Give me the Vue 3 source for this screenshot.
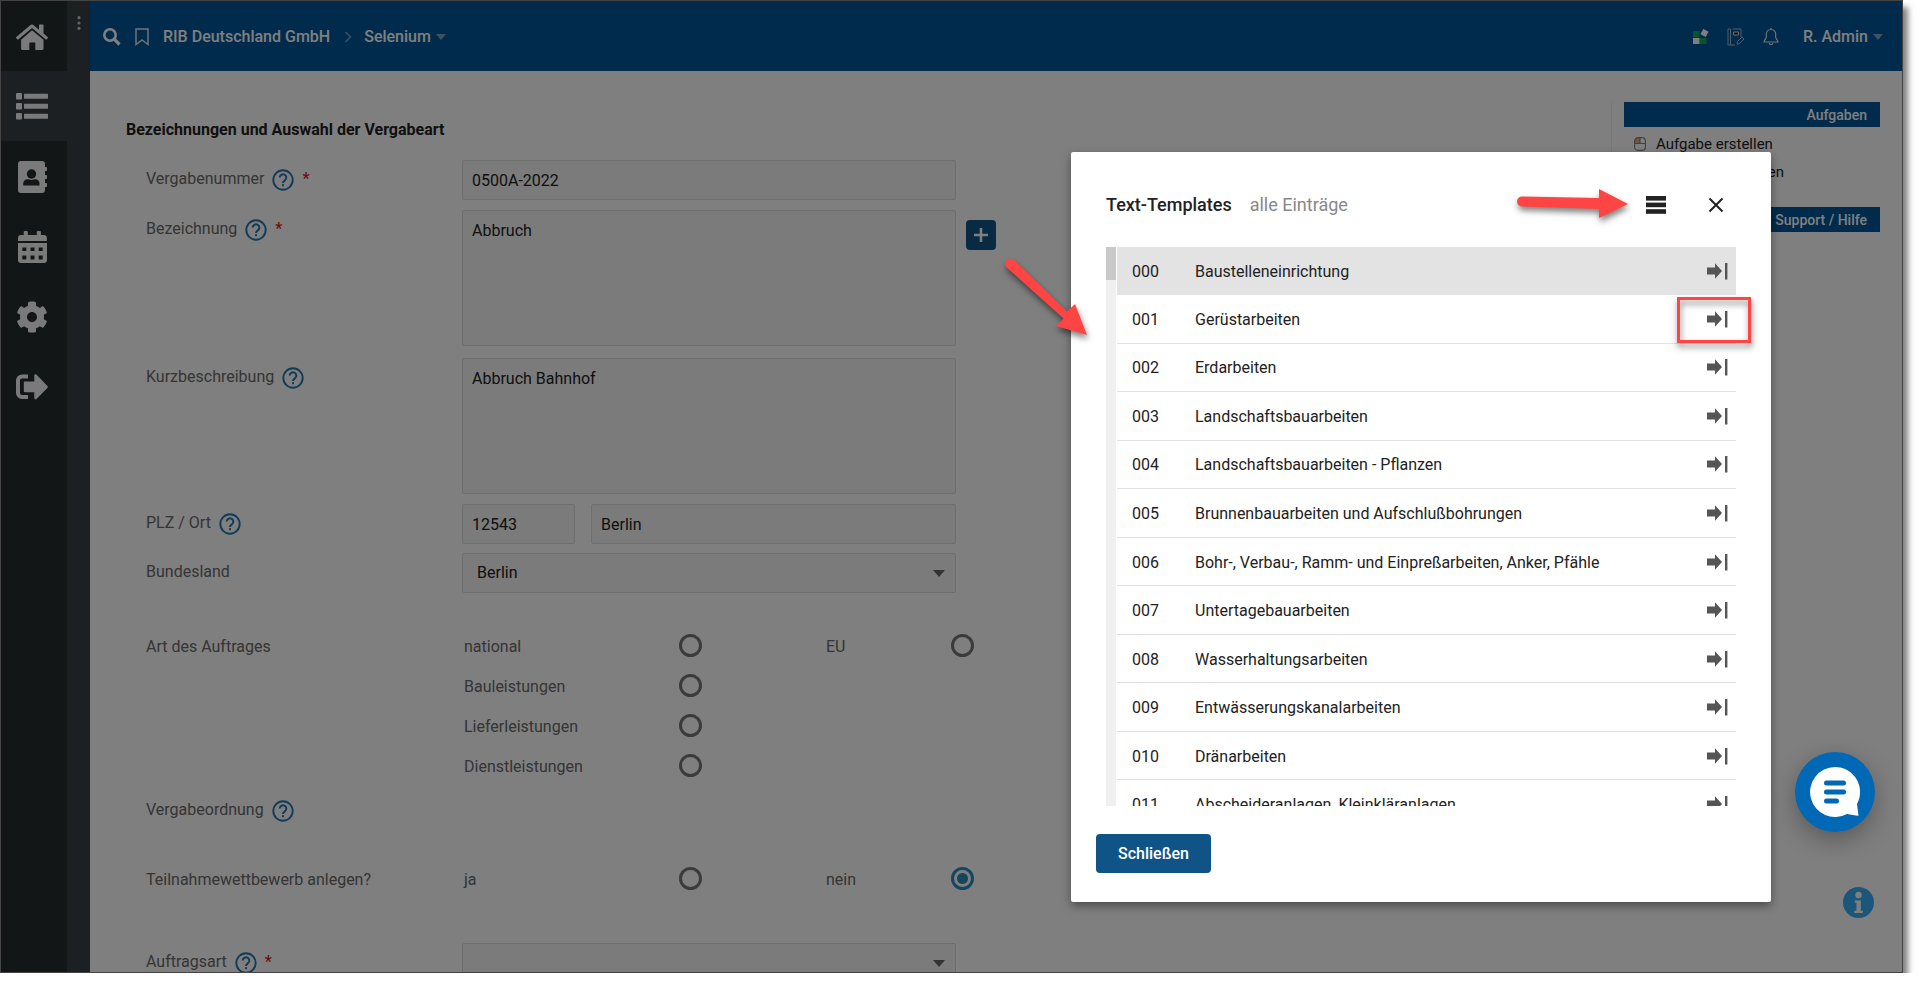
<script setup>
import { ref } from 'vue'

const templates = [
  ['000', 'Baustelleneinrichtung'],
  ['001', 'Gerüstarbeiten'],
  ['002', 'Erdarbeiten'],
  ['003', 'Landschaftsbauarbeiten'],
  ['004', 'Landschaftsbauarbeiten - Pflanzen'],
  ['005', 'Brunnenbauarbeiten und Aufschlußbohrungen'],
  ['006', 'Bohr-, Verbau-, Ramm- und Einpreßarbeiten, Anker, Pfähle'],
  ['007', 'Untertagebauarbeiten'],
  ['008', 'Wasserhaltungsarbeiten'],
  ['009', 'Entwässerungskanalarbeiten'],
  ['010', 'Dränarbeiten'],
  ['011', 'Abscheideranlagen, Kleinkläranlagen'],
]
const number = ref('0500A-2022')
const title = ref('Abbruch')
const summary = ref('Abbruch Bahnhof')
const zip = ref('12543')
const city = ref('Berlin')
const state = ref('Berlin')
const orderKind = ref('')
const competition = ref('nein')
</script>

<template>
  <div class="frame">
    <svg class="defs" width="0" height="0" aria-hidden="true">
      <symbol id="help" viewBox="0 0 22 22">
        <circle cx="11" cy="11" r="9.7" fill="none" stroke="currentColor" stroke-width="1.9" />
        <path d="M7.7 8.6a3.3 3.3 0 1 1 5.2 2.7c-1.2.9-1.9 1.4-1.9 2.7" fill="none" stroke="currentColor" stroke-width="2" />
        <rect x="10" y="15.2" width="2" height="2" fill="currentColor" />
      </symbol>
      <symbol id="insert" viewBox="0 0 21 18">
        <path d="M0 5.5h8V1.2L15 9l-7 7.8v-4.3H0z" fill="currentColor" />
        <rect x="18" y="1" width="2.4" height="16.5" fill="currentColor" />
      </symbol>
      <symbol id="mouse" viewBox="0 0 12 14">
        <path d="M1 1h5v5H1z" fill="#dcae84" />
        <rect x=".6" y=".6" width="10.8" height="12.8" rx="3.5" fill="none" stroke="#808080" stroke-width="1.1" />
        <path d="M.6 6.5h10.8M6 .6v6" stroke="#808080" stroke-width="1.1" />
      </symbol>
    </svg>

    <div class="app">
      <nav class="sidebar" aria-label="Hauptnavigation">
        <a href="#" class="nav" aria-label="Start">
          <svg width="32" height="26" viewBox="0 0 32 26" fill="currentColor"><path d="M16 .4a1.6 1.6 0 0 1 1.1.4L23 5.8V1.2c0-.4.3-.7.7-.7h3.1c.4 0 .7.3.7.7v8.4l4.2 3.5c.4.3.4.7.1 1l-1 1.2c-.3.3-.7.3-1 .1L16 3.9 2.200 15.400c-.3.2-.7.2-1-.1l-1-1.200c-.3-.3-.2-.7.1-1L14.800.8A1.800 1.800 0 0 1 16 .4z" /><path d="M16 6.200 27.500 15.700v9c0 .7-.5 1.200-1.200 1.200h-7v-6.400c0-.6-.4-1-1-1h-4c-.6 0-1 .4-1 1v6.400h-7c-.7 0-1.200-.5-1.200-1.200v-9z" /></svg>
        </a>
        <a href="#" class="nav current" aria-label="Liste">
          <svg width="32" height="27" viewBox="0 0 32 27" fill="currentColor"><rect width="6" height="6.400" rx="1" /><rect y="10" width="6" height="6.400" rx="1" /><rect y="20" width="6" height="6.400" rx="1" /><rect x="8" y=".8" width="24" height="5" rx=".6" /><rect x="8" y="10.800" width="24" height="5" rx=".6" /><rect x="8" y="20.800" width="24" height="5" rx=".6" /></svg>
        </a>
        <a href="#" class="nav" aria-label="Adressbuch">
          <svg width="32" height="32" viewBox="-2 0 32 32"><path fill="currentColor" d="M3 0h21a3 3 0 0 1 3 3v3h1.200c.5 0 .8.300.8.800v2.400c0 .5-.3.800-.8.800H27v4h1.200c.5 0 .8.300.8.800v2.400c0 .5-.3.800-.8.800H27v4h1.200c.5 0 .8.300.8.800v2.400c0 .5-.3.800-.8.800H27v3a3 3 0 0 1-3 3H3a3 3 0 0 1-3-3V3a3 3 0 0 1 3-3z" /><circle cx="13.500" cy="13" r="4.700" fill="#242c2e" /><path fill="#242c2e" d="M5.200 24.500v-2c0-2.400 2-4.200 4.500-4.200 1 0 2 .7 3.800.7s2.800-.7 3.800-.7c2.500 0 4.200 1.800 4.200 4.200v2z" /></svg>
        </a>
        <a href="#" class="nav" aria-label="Kalender">
          <svg width="32" height="32" viewBox="-2 0 32 32" fill="currentColor"><path d="M6.500 0h2.500c.5 0 .8.400.8.800V4h9V.8c0-.4.300-.8.800-.8h2.500c.5 0 .8.400.8.800V4h3c1.700 0 3 1.300 3 3v3H0V7c0-1.700 1.300-3 3-3h2.700V.8c0-.4.300-.8.800-.8z" /><path fill-rule="evenodd" d="M0 12h29v17c0 1.700-1.300 3-3 3H3c-1.700 0-3-1.300-3-3zm4.300 4.500v3.500h4v-3.500zm8.200 0v3.500h4v-3.500zm8.200 0v3.500h4v-3.500zM4.300 24.500v4h4v-4zm8.200 0v4h4v-4zm8.200 0v4h4v-4z" /></svg>
        </a>
        <a href="#" class="nav" aria-label="Einstellungen">
          <svg width="32" height="32" viewBox="0 0 512 512"><path fill="currentColor" d="M487.400 315.700l-42.600-24.600c4.300-23.200 4.300-47 0-70.200l42.600-24.600c4.900-2.800 7.100-8.600 5.500-14-11.100-35.600-30-67.800-54.700-94.600-3.800-4.100-10-5.100-14.800-2.300L380.800 110c-17.900-15.400-38.500-27.300-60.800-35.100V25.800c0-5.600-3.900-10.500-9.400-11.700-36.700-8.200-74.300-7.800-109.200 0-5.500 1.200-9.400 6.100-9.400 11.700V75c-22.200 7.900-42.800 19.800-60.800 35.100L88.700 85.500c-4.900-2.800-11-1.900-14.800 2.300-24.700 26.700-43.600 58.900-54.700 94.600-1.700 5.400.6 11.200 5.500 14L67.300 221c-4.300 23.200-4.300 47 0 70.200l-42.600 24.600c-4.900 2.800-7.100 8.600-5.500 14 11.100 35.600 30 67.800 54.700 94.600 3.800 4.100 10 5.100 14.800 2.300l42.600-24.600c17.900 15.400 38.500 27.300 60.800 35.100v49.200c0 5.600 3.900 10.500 9.400 11.700 36.700 8.200 74.300 7.800 109.200 0 5.500-1.200 9.400-6.100 9.400-11.700v-49.200c22.200-7.900 42.800-19.800 60.800-35.100l42.600 24.600c4.900 2.800 11 1.900 14.800-2.300 24.700-26.700 43.600-58.900 54.700-94.600 1.500-5.500-.7-11.300-5.600-14.100zM256 336c-44.100 0-80-35.900-80-80s35.900-80 80-80 80 35.900 80 80-35.900 80-80 80z" /></svg>
        </a>
        <a href="#" class="nav" aria-label="Abmelden">
          <svg width="32" height="26" viewBox="0 0 32 26"><path fill="none" stroke="currentColor" stroke-width="4" stroke-linecap="square" d="M10 2.500H6a4 4 0 0 0-4 4v12.500a4 4 0 0 0 4 4h4" /><path fill="currentColor" d="M9 7.600h9.300V1.500c0-1.100 1.300-1.600 2.100-.9l11 11.300c.6.600.6 1.500 0 2.100l-11 11c-.8.800-2.100.3-2.100-.8v-6H9c-.7 0-1.200-.5-1.200-1.200V8.800c0-.7.5-1.200 1.200-1.200z" /></svg>
        </a>
      </nav>
      <div class="rail">
        <button class="plain" aria-label="Menü">
          <svg width="4" height="14" viewBox="0 0 4 14" fill="#c8c8c8"><circle cx="2" cy="1.700" r="1.600" /><circle cx="2" cy="7" r="1.600" /><circle cx="2" cy="12.300" r="1.600" /></svg>
        </button>
      </div>

      <div class="page">
        <header class="topbar">
          <button class="plain" aria-label="Suche"><svg width="18" height="18" viewBox="0 0 18 18" fill="none" stroke="#fff"><circle cx="7" cy="7" r="5.700" stroke-width="2.600" /><path d="M11.200 11.200 16.500 16.500" stroke-width="3.200" /></svg></button>
          <button class="plain mark" aria-label="Lesezeichen"><svg width="14" height="18" viewBox="0 0 14 18"><path d="M1 1h12v15.500l-6-4.500-6 4.500z" fill="none" stroke="#dce6ee" stroke-width="1.500" /></svg></button>
          <a href="#">RIB Deutschland GmbH</a>
          <svg class="chev" width="8" height="12" viewBox="0 0 8 12"><path d="M1.500 1 6.500 6l-5 5" fill="none" stroke="#7fa4c4" stroke-width="1.500" /></svg>
          <button class="plain drop">Selenium<svg width="10" height="6" viewBox="0 0 10 6"><path d="M0 0h10L5 6z" fill="#7fa4c4" /></svg></button>
          <div class="tools">
            <button class="plain" aria-label="Apps"><svg width="16" height="16" viewBox="0 0 16 16"><rect x="0" y="2" width="6.500" height="6.500" fill="#10a860" /><rect x="0" y="9" width="6.500" height="6" fill="#fff" /><rect x="7" y="9" width="6.500" height="6" fill="#10a860" /><rect x="8.500" y="1" width="6" height="6" fill="#fff" transform="rotate(28 11.500 4)" /></svg></button>
            <button class="plain" aria-label="Protokoll"><svg width="18" height="18" viewBox="0 0 18 18" fill="none" stroke="#9fbdd4" stroke-width="1"><path d="M1 1v16h7M3.500 1v16M1 1h2.500M5.500 1h8.500v8" /><path d="M6.500 4h5v3h-5z" fill="#222" stroke="#cfdde8" /><path d="m10.500 13.500 4.500-4.500 2 2-4.500 4.500-2.500.7z" /></svg></button>
            <button class="plain" aria-label="Benachrichtigungen"><svg width="16" height="18" viewBox="0 0 16 18" fill="none" stroke="#dce6ee" stroke-width="1.200"><path d="M8 1.500c-3 0-4.700 2.200-4.700 5V9c0 2-2.300 3.300-2.300 5h14c0-1.700-2.300-3-2.300-5V6.500c0-2.800-1.700-5-4.700-5zM8 0v1.500M6.300 15c.2 2.300 3.200 2.300 3.400 0" /></svg></button>
            <button class="plain drop">R. Admin<svg width="10" height="6" viewBox="0 0 10 6"><path d="M0 0h10L5 6z" fill="#7fa4c4" /></svg></button>
          </div>
        </header>

        <main class="body">
          <form class="form" @submit.prevent>
            <h1>Bezeichnungen und Auswahl der Vergabeart</h1>
            <div class="row">
              <div class="cap"><label for="nr">Vergabenummer</label><svg class="help"><use href="#help" /></svg><b>*</b></div>
              <input id="nr" v-model="number" class="field" type="text" />
            </div>
            <div class="row wide">
              <div class="cap"><label for="bez">Bezeichnung</label><svg class="help"><use href="#help" /></svg><b>*</b></div>
              <textarea id="bez" v-model="title" class="field"></textarea>
              <button class="add" type="button" aria-label="Textvorlage wählen"><svg width="14" height="14" viewBox="0 0 14 14"><path d="M7 0v14M0 7h14" stroke="#fff" stroke-width="2.600" /></svg></button>
            </div>
            <div class="row">
              <div class="cap"><label for="kurz">Kurzbeschreibung</label><svg class="help"><use href="#help" /></svg></div>
              <textarea id="kurz" v-model="summary" class="field"></textarea>
            </div>
            <div class="row place">
              <div class="cap"><label for="plz">PLZ / Ort</label><svg class="help"><use href="#help" /></svg></div>
              <div class="pair">
                <input id="plz" v-model="zip" class="field" type="text" />
                <input v-model="city" class="field" type="text" aria-label="Ort" />
              </div>
            </div>
            <div class="row">
              <div class="cap"><label for="land">Bundesland</label></div>
              <div class="select">
                <select id="land" v-model="state" class="field"><option>Berlin</option></select>
                <svg width="12" height="7" viewBox="0 0 12 7"><path d="M0 0h12L6 7z" fill="#666" /></svg>
              </div>
            </div>
            <div class="row kinds">
              <div class="cap">Art des Auftrages</div>
              <div class="options">
                <label class="opt"><span>national</span><input v-model="orderKind" type="radio" name="scope" value="national" /></label>
                <label class="opt short"><span>EU</span><input v-model="orderKind" type="radio" name="scope" value="eu" /></label>
                <label class="opt"><span>Bauleistungen</span><input type="radio" name="service" value="bau" /></label>
                <label class="opt"><span>Lieferleistungen</span><input type="radio" name="service" value="liefer" /></label>
                <label class="opt"><span>Dienstleistungen</span><input type="radio" name="service" value="dienst" /></label>
              </div>
            </div>
            <div class="row order">
              <div class="cap">Vergabeordnung<svg class="help"><use href="#help" /></svg></div>
            </div>
            <div class="row contest">
              <div class="cap">Teilnahmewettbewerb anlegen?</div>
              <div class="options">
                <label class="opt"><span>ja</span><input v-model="competition" type="radio" name="contest" value="ja" /></label>
                <label class="opt short"><span>nein</span><input v-model="competition" type="radio" name="contest" value="nein" /></label>
              </div>
            </div>
            <div class="row">
              <div class="cap"><label for="art">Auftragsart</label><svg class="help"><use href="#help" /></svg><b>*</b></div>
              <div class="select">
                <select id="art" class="field"><option></option></select>
                <svg width="12" height="7" viewBox="0 0 12 7"><path d="M0 0h12L6 7z" fill="#666" /></svg>
              </div>
            </div>
          </form>

          <aside class="side">
            <h2>Aufgaben</h2>
            <ul>
              <li><svg width="12" height="14"><use href="#mouse" /></svg><a href="#">Aufgabe erstellen</a></li>
              <li><svg width="12" height="14"><use href="#mouse" /></svg><a href="#">Aufgaben anzeigen</a></li>
            </ul>
            <h2>Support / Hilfe</h2>
          </aside>
        </main>
      </div>
    </div>

    <button class="info" aria-label="Information">
      <svg width="31" height="31" viewBox="0 0 31 31"><circle cx="15.500" cy="15.500" r="15.500" fill="#36aef4" /><circle cx="15.500" cy="8" r="3.200" fill="#fff" /><path d="M11.800 13.500h6v10.300h2v2.200h-8.600v-2.200h2.300v-8h-1.700z" fill="#fff" /></svg>
    </button>

    <div class="scrim"></div>

    <section class="dialog" role="dialog" aria-label="Text-Templates">
      <header class="dhead">
        <h2>Text-Templates</h2>
        <span>alle Einträge</span>
        <button class="plain lines" aria-label="Ansicht"><svg width="20" height="18" viewBox="0 0 20 18" fill="#222"><rect y="0" width="20" height="4.600" /><rect y="6.600" width="20" height="4.600" /><rect y="13.200" width="20" height="4.600" /></svg></button>
        <button class="plain" aria-label="Dialog schließen"><svg width="16" height="16" viewBox="0 0 16 16"><path d="m1.500 1.500 13 13m0-13-13 13" stroke="#222" stroke-width="2" /></svg></button>
      </header>
      <div class="list">
        <div class="track"><div class="thumb"></div></div>
        <table>
          <tbody>
            <tr v-for="[code, name] in templates" :key="code">
              <td class="code">{{ code }}</td>
              <td>{{ name }}</td>
              <td class="act"><button class="plain" :aria-label="name + ' übernehmen'"><svg width="21" height="18"><use href="#insert" /></svg></button></td>
            </tr>
          </tbody>
        </table>
      </div>
      <footer class="dfoot"><button class="close">Schließen</button></footer>
    </section>

    <button class="chat" aria-label="Chat">
      <svg width="50" height="50" viewBox="0 0 50 50"><path d="M25 0a25 25 0 1 0 12 47c4 .8 8 1.500 11.500 1.800L47 37A25 25 0 0 0 25 0z" fill="#fff" /><path d="M16.500 16h17M16.500 25h17M16.500 34h10" stroke="#0068b5" stroke-width="5" stroke-linecap="round" /></svg>
    </button>

    <svg class="arrow flat" width="116" height="34" viewBox="0 0 116 34"><path d="M7 9.500 84 11V2l29 15-29 14v-9L7 19.500a5 5 0 0 1 0-10z" fill="#ff4444" /></svg>
    <svg class="arrow slant" width="92" height="86" viewBox="0 0 92 86"><path d="m12 6 53 51.500L73 50l12 31-31-9 7.500-7.500L4.800 13.500A5.200 5.200 0 0 1 12 6z" fill="#ff4444" /></svg>
    <div class="marker"></div>
  </div>
</template>

<style>
body { background: #fff; }
</style>

<style scoped>
* { box-sizing: border-box; }
.frame {
  position: relative;
  height: calc(100vh - 15px);
  margin-right: 15px;
  border: 1px solid #444;
  overflow: visible;
  box-shadow: 5px 7px 6px rgba(0, 0, 0, 0.5);
  font: 16px/24px Roboto, sans-serif;
  color: #222;
}
.defs { position: absolute; }
button, input, select, textarea { font: inherit; color: inherit; }
a { color: inherit; text-decoration: none; }
svg { display: block; flex: none; }
h1, h2, ul { margin: 0; padding: 0; font-size: 16px; }
.plain { display: flex; align-items: center; padding: 0; border: 0; background: none; }
.app { display: flex; height: 100%; overflow: hidden; }
.sidebar { width: 66px; background: #242c2e; color: #f4f4f4; }
.nav { display: flex; align-items: center; height: 70px; padding: 1px 0 0 15px; }
.current { background: #384044; }
.rail { width: 23px; padding: 15px 0 0 10px; background: #384044; }
.page { flex: 1; display: flex; flex-direction: column; min-width: 0; background: #fff; }
.topbar {
  flex: none;
  display: flex;
  align-items: center;
  height: 70px;
  padding: 2px 19px 0 13px;
  background: #005698;
  color: #fff;
  font-weight: 500;
}
.mark { margin: 0 14px; }
.chev { margin: 0 12px 0 14px; }
.drop { gap: 5px; font-weight: 500; }
.tools { display: flex; align-items: center; gap: 18px; margin-left: auto; }
.tools .drop { margin-left: 6px; }
.body { flex: 1; display: flex; min-height: 0; }
.form { flex: 1; padding: 47px 20px 0 56px; color: #6a6a6a; }
h1 { margin: 0 0 18px -20px; font-weight: 700; color: #222; line-height: 24px; }
.row { display: grid; grid-template-columns: 316px minmax(0, 494px) 30px; margin-bottom: 10px; }
.row.wide { margin-bottom: 12px; }
.row.place { margin-bottom: 9px; }
.cap { display: flex; gap: 8px; padding-top: 7px; height: 31px; }
.help { width: 22px; height: 22px; margin-top: 2px; color: #2277b0; }
.cap b { font-weight: 500; color: #e01818; }
.field {
  display: block;
  width: 100%;
  height: 40px;
  padding: 0 9px;
  border: 1px solid #dcdcdc;
  border-radius: 2px;
  background: #f6f6f6;
  color: #222;
  outline: 0;
}
textarea.field { height: 136px; padding: 8px 9px; resize: none; }
.add {
  display: grid;
  place-items: center;
  width: 30px;
  height: 30px;
  margin: 10px 0 0 10px;
  padding: 0;
  border: 0;
  border-radius: 4px;
  background: #105487;
}
.pair { display: grid; grid-template-columns: 113px 1fr; gap: 16px; }
.select { position: relative; }
.select select { appearance: none; padding: 0 14px; }
.select svg { position: absolute; right: 11px; top: 17px; pointer-events: none; }
.row.kinds { margin-top: 32px; margin-bottom: 6px; }
.kinds .cap, .contest .cap { padding-top: 10px; }
.options {
  grid-column: 2 / 4;
  display: grid;
  grid-template-columns: 238px 148px;
  column-gap: 124px;
  padding-left: 2px;
}
.opt { grid-column: 1; display: flex; align-items: center; justify-content: space-between; height: 40px; }
.opt span { padding-top: 3px; }
.opt.short { grid-column: 2; }
.opt input {
  appearance: none;
  width: 23px;
  height: 23px;
  margin: 0;
  border: 3px solid #777;
  border-radius: 50%;
}
.opt input:checked {
  border-color: #2a8cc0;
  background: radial-gradient(circle, #2a8cc0 5px, transparent 6px);
}
.row.order { height: 40px; margin-bottom: 27px; }
.row.contest { margin-bottom: 45px; }
.side {
  width: 291px;
  height: 200px;
  margin-top: 31px;
  padding: 0 22px 0 12px;
  border-left: 1px solid #eee;
}
.side h2 {
  height: 25px;
  padding-right: 13px;
  background: #005698;
  color: #fff;
  font-size: 14px;
  font-weight: 500;
  line-height: 26px;
  text-align: right;
}
.side ul { display: grid; gap: 4px; padding: 5px 0 23px 10px; list-style: none; font-size: 15px; }
.side li { display: flex; align-items: center; gap: 10px; }
.scrim { position: absolute; inset: 0; background: rgba(0, 0, 0, 0.5); }
.info { position: absolute; right: 28px; bottom: 54px; padding: 0; border: 0; background: none; }
.dialog {
  position: absolute;
  top: 151px;
  right: 131px;
  width: 700px;
  border-radius: 2px;
  background: #fff;
  box-shadow: 0 4px 10px rgba(0, 0, 0, 0.4);
}
.dhead { display: flex; align-items: center; gap: 18px; height: 95px; padding: 11px 47px 0 35px; font-size: 18px; color: #888; }
.dhead h2 { font-size: 18px; font-weight: 500; color: #222; }
.lines { margin-left: auto; margin-right: 24px; }
.list { display: flex; gap: 1px; height: 559px; margin: 0 35px; overflow: hidden; }
.track { width: 10px; background: #f0f0f0; }
.thumb { height: 33px; background: #c9c9c9; }
table { flex: 1; height: 582px; border-collapse: collapse; }
td { padding: 2px 0 0; border-bottom: 1px solid #e2e2e2; }
tr:first-child td { background: #e3e3e3; }
.code { width: 78px; padding-left: 15px; }
.act { width: 29px; padding-top: 0; color: #555; }
.dfoot { padding: 28px 25px 29px; }
.close { height: 39px; padding: 0 22px; border: 0; border-radius: 4px; background: #105487; color: #fff; font-weight: 500; }
.chat {
  position: absolute;
  right: 27px;
  bottom: 140px;
  display: grid;
  place-items: center;
  width: 80px;
  height: 80px;
  padding: 0;
  border: 0;
  border-radius: 50%;
  background: #0068b5;
  box-shadow: 0 8px 24px rgba(0, 0, 0, 0.3);
}
.arrow { position: absolute; filter: drop-shadow(1px 4px 3px rgba(0, 0, 0, 0.5)); }
.flat { top: 186px; right: 271px; }
.slant { top: 253px; right: 808px; }
.marker {
  position: absolute;
  top: 296px;
  right: 151px;
  width: 74px;
  height: 46px;
  border: 3px solid #ff4444;
  filter: drop-shadow(1px 4px 3px rgba(0, 0, 0, 0.5));
}
</style>
